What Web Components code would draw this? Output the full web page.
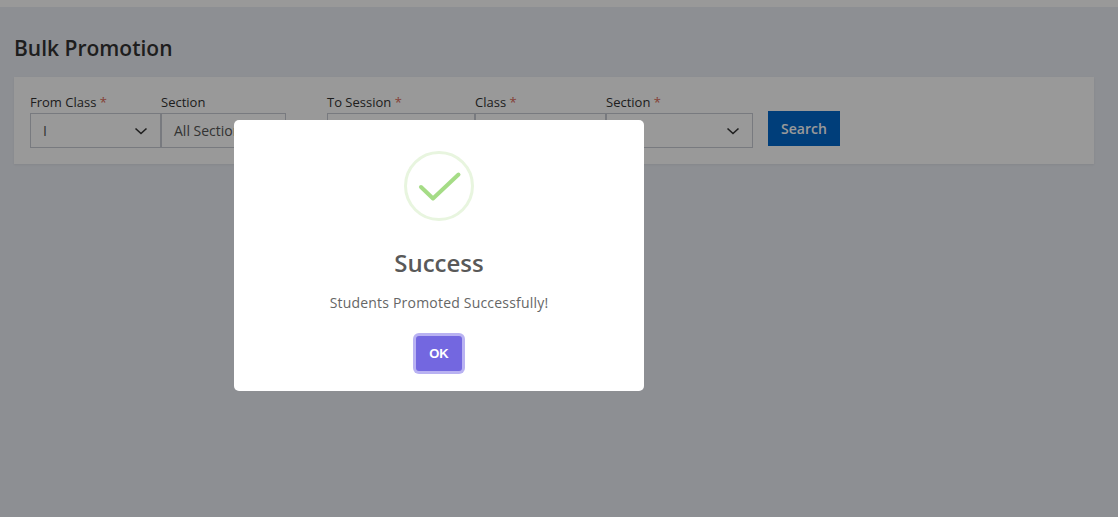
<!DOCTYPE html>
<html lang="en">
<head>
<meta charset="utf-8">
<title>Bulk Promotion</title>
<style>
  html, body { margin: 0; height: 100%; overflow: hidden; }
  body { background: #ebeef5; font-family: "Open Sans", "Liberation Sans", sans-serif; color: #333; }
</style>
</head>
<body>
<bulk-page>
  <filter-card>
    <select-field label="From Class" required value="I" width="131"></select-field>
    <select-field label="Section" value="All Sections" width="125"></select-field>
    <select-field label="To Session" required width="148" gap="41"></select-field>
    <select-field label="Class" required width="131"></select-field>
    <select-field label="Section" required width="147"></select-field>
    <search-button>Search</search-button>
  </filter-card>
</bulk-page>
<success-alert title="Success" message="Students Promoted Successfully!"></success-alert>

<script>
class BulkPage extends HTMLElement {
  constructor() {
    super();
    this.root = this.attachShadow({ mode: 'open' });
    this.root.innerHTML = `
      <style>
        :host { display: block; }
        .topbar { height: 7px; background: #fff; }
        h1 {
          margin: 0;
          padding: 27px 14px 14px;
          font-size: 21px;
          line-height: 29px;
          font-weight: 600;
          color: #333;
        }
        .content { padding: 0 24px 0 14px; }
      </style>
      <div class="topbar"></div>
      <h1>Bulk Promotion</h1>
      <div class="content"><slot></slot></div>
    `;
  }
}
customElements.define('bulk-page', BulkPage);

class FilterCard extends HTMLElement {
  constructor() {
    super();
    this.root = this.attachShadow({ mode: 'open' });
    this.root.innerHTML = `
      <style>
        :host {
          display: flex;
          align-items: flex-start;
          height: 87px;
          box-sizing: border-box;
          padding: 17px 16px 0;
          background: #fff;
          box-shadow: 0 1px 2px rgba(0,0,0,0.06);
        }
      </style>
      <slot></slot>
    `;
  }
}
customElements.define('filter-card', FilterCard);

class SelectField extends HTMLElement {
  constructor() {
    super();
    this.root = this.attachShadow({ mode: 'open' });
  }
  connectedCallback() {
    const label = this.getAttribute('label');
    const value = this.getAttribute('value') || '';
    const star = this.hasAttribute('required') ? ' <span class="star">*</span>' : '';
    this.root.innerHTML = `
      <style>
        :host {
          display: block;
          flex: none;
          width: ${this.getAttribute('width')}px;
          margin-left: ${this.getAttribute('gap') || 0}px;
          font-size: 13px;
        }
        .label { display: block; height: 19px; line-height: 17px; color: #333; white-space: nowrap; }
        .star { color: #dd6b5a; }
        .box {
          display: flex;
          align-items: center;
          justify-content: space-between;
          box-sizing: border-box;
          height: 35px;
          padding: 0 12px 0 12px;
          border: 1px solid #c8ccd4;
          background: #fff;
          color: #555;
          font-size: 14px;
          white-space: nowrap;
        }
        svg { flex: none; width: 14px; height: 14px; }
      </style>
      <span class="label">${label}${star}</span>
      <div class="box">
        <span>${value}</span>
        <svg viewBox="0 0 14 14" fill="none" stroke="#333" stroke-width="1.6"><path d="M1.500 4.500l5.500 5 5.500-5"/></svg>
      </div>
    `;
  }
}
customElements.define('select-field', SelectField);

class SearchButton extends HTMLElement {
  constructor() {
    super();
    this.root = this.attachShadow({ mode: 'open' });
    this.root.innerHTML = `
      <style>
        :host { display: block; flex: none; margin: 17px 0 0 15px; }
        button {
          display: block;
          width: 72px;
          height: 35px;
          padding: 0;
          border: 0;
          background: #0068cc;
          color: #fff;
          font: 600 14px "Open Sans", "Liberation Sans", sans-serif;
        }
      </style>
      <button><slot></slot></button>
    `;
  }
}
customElements.define('search-button', SearchButton);

class SuccessAlert extends HTMLElement {
  constructor() {
    super();
    this.root = this.attachShadow({ mode: 'open' });
  }
  connectedCallback() {
    this.root.innerHTML = `
      <style>
        :host {
          position: fixed;
          inset: 0;
          display: block;
          box-sizing: border-box;
          padding: 120px 0 0 234px;
          background: rgba(0,0,0,0.4);
        }
        .dialog {
          display: flex;
          flex-direction: column;
          align-items: center;
          box-sizing: border-box;
          width: 410px;
          height: 271px;
          padding-top: 31px;
          background: #fff;
          border-radius: 5px;
        }
        svg { display: block; width: 70px; height: 70px; }
        h2 {
          margin: 25px 0 0;
          font-size: 24px;
          line-height: 33px;
          font-weight: 600;
          color: #595959;
        }
        p {
          margin: 14px 0 0;
          font-size: 14px;
          line-height: 20px;
          letter-spacing: 0.2px;
          color: #666;
        }
        button {
          box-sizing: border-box;
          width: 46px;
          height: 35px;
          margin-top: 23px;
          padding: 0;
          border: 0;
          border-radius: 3px;
          background: #7367e0;
          box-shadow: 0 0 0 3px #b9b2f2;
          color: #fff;
          font: 700 13px "Liberation Sans", Arial, sans-serif;
        }
      </style>
      <div class="dialog" role="dialog">
        <svg viewBox="0 0 70 70" fill="none">
          <circle cx="35" cy="35" r="33.500" stroke="#e8f5df" stroke-width="3"/>
          <path d="M17 36L29 47.500L54.500 23.500" stroke="#a5dc86" stroke-width="4" stroke-linecap="round" stroke-linejoin="round"/>
        </svg>
        <h2>${this.getAttribute('title')}</h2>
        <p>${this.getAttribute('message')}</p>
        <button>OK</button>
      </div>
    `;
  }
}
customElements.define('success-alert', SuccessAlert);
</script>
</body>
</html>
